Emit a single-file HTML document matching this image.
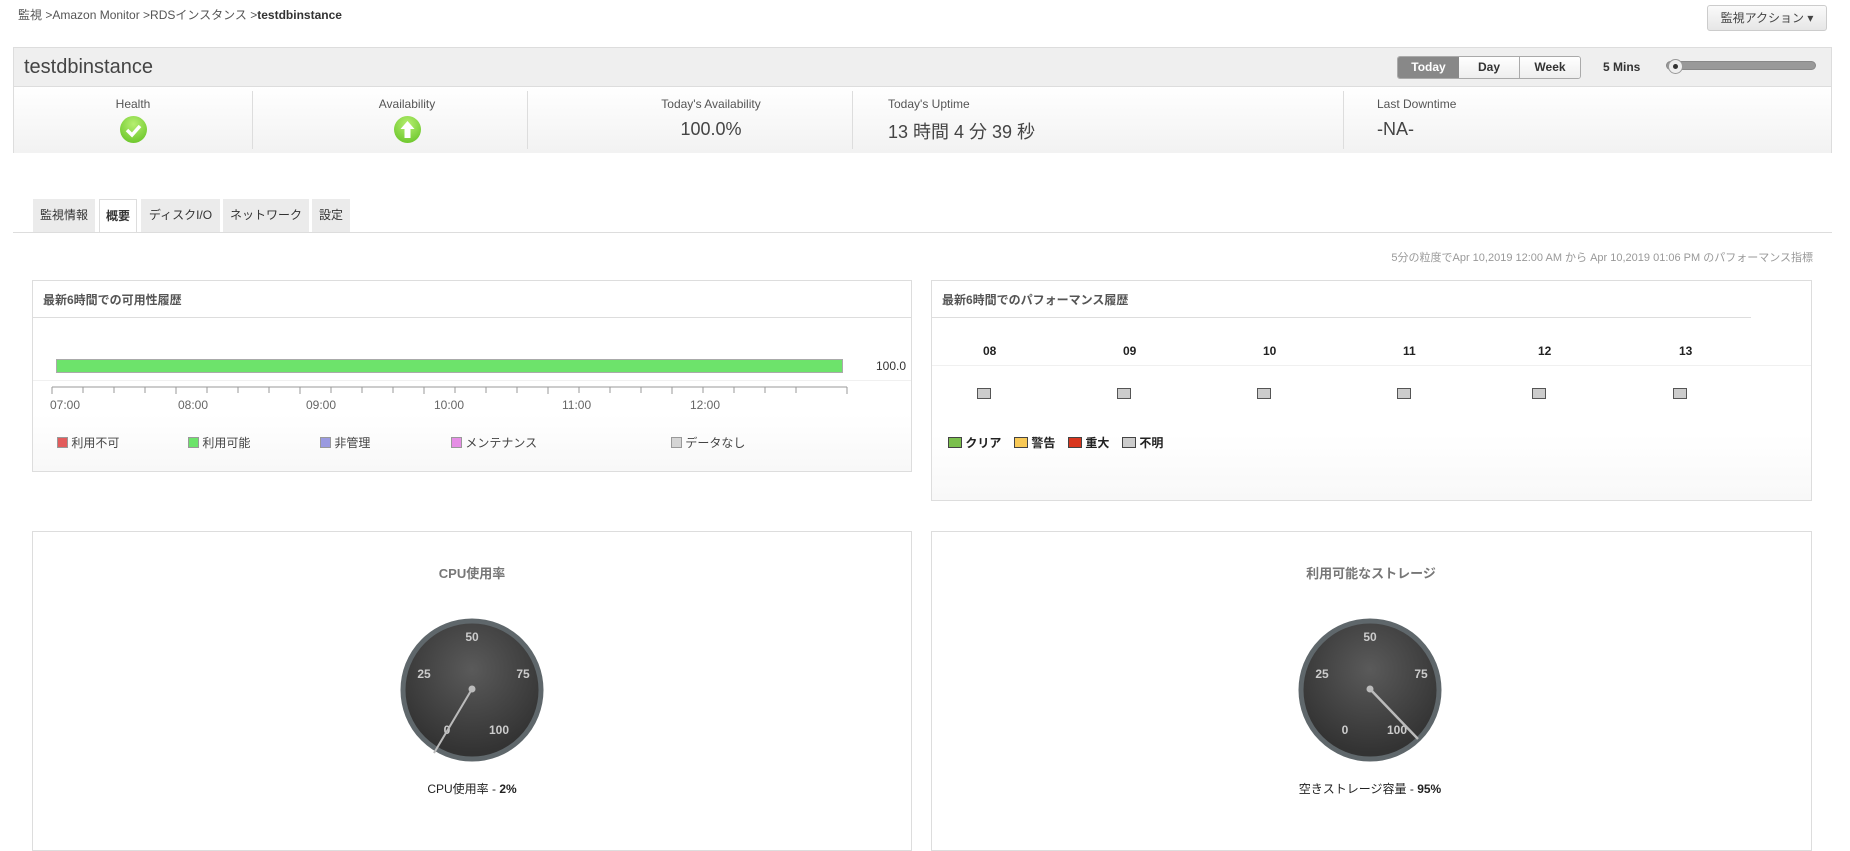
<!DOCTYPE html>
<html><head><meta charset="utf-8"><style>
*{margin:0;padding:0;box-sizing:border-box}
body{width:1850px;height:841px;background:#fff;font-family:"Liberation Sans","Noto Sans CJK JP",sans-serif;position:relative;overflow:hidden;color:#333}
.a{position:absolute;white-space:nowrap}
.bc{left:18px;top:6px;font-size:12px;color:#555}
.btn{left:1707px;top:5px;width:120px;height:26px;border:1px solid #ccc;border-radius:3px;background:linear-gradient(#fafafa,#e6e6e6);font-size:12px;color:#444;text-align:center;line-height:24px}
.hdr{left:13px;top:47px;width:1819px;height:106px;border:1px solid #ddd;background:#fff}
.hdrt{position:absolute;left:0;top:0;width:100%;height:39px;background:#efefef;border-bottom:1px solid #ddd}
.stats{position:absolute;left:0;top:39px;width:100%;height:66px;background:linear-gradient(#fff,#f2f2f2)}
.dv{position:absolute;top:4px;height:58px;width:1px;background:#ddd}
.lbl{font-size:12px;color:#555}
.tb{top:199px;height:33px;font-size:12px;line-height:33px;text-align:center;background:#ebebeb;color:#333}
.pan{border:1px solid #ddd;background:linear-gradient(#fff 70%,#f8f8f8)}
.ph{font-size:12px;font-weight:bold;color:#555}
.sq{width:11px;height:11px;display:inline-block;border:1px solid #999;vertical-align:-1px}
.lg{font-size:12px;color:#444;top:434px}
.hr{font-size:12px;font-weight:bold;color:#222;top:344px}
.bx{top:388px;width:14px;height:11px;border:1px solid #555;background:#ccc}
.pl{font-size:12px;font-weight:bold;color:#222;top:434px}
</style></head><body>
<div class="a bc">監視 &gt;Amazon Monitor &gt;RDSインスタンス &gt;<b style="color:#333">testdbinstance</b></div>
<div class="a btn">監視アクション ▾</div>
<div class="a hdr">
 <div class="hdrt">
  <div class="a" style="left:10px;top:8px;font-size:20px;color:#444">testdbinstance</div>
  <div class="a" style="left:1383px;top:8px;width:184px;height:23px;border:1px solid #aaa;border-radius:3px;overflow:hidden;display:flex;font-size:12px;font-weight:bold;line-height:21px;text-align:center">
   <div style="width:61px;background:#888;color:#fff">Today</div><div style="width:61px;background:linear-gradient(#fff,#eee);border-right:1px solid #aaa;color:#333">Day</div><div style="flex:1;background:linear-gradient(#fff,#eee);color:#333">Week</div></div>
  <div class="a" style="left:1589px;top:12px;font-size:12px;font-weight:bold;color:#333">5 Mins</div>
  <div class="a" style="left:1652px;top:13px;width:150px;height:9px;border-radius:5px;background:#999;border:1px solid #888"></div>
  <div class="a" style="left:1654px;top:11px;width:15px;height:15px;border-radius:50%;background:#eee;border:1px solid #999"><div style="width:5px;height:5px;background:#333;border-radius:50%;margin:4px"></div></div>
 </div>
 <div class="stats">
  <div class="dv" style="left:238px"></div><div class="dv" style="left:513px"></div><div class="dv" style="left:838px"></div><div class="dv" style="left:1329px"></div>
  <div class="a lbl" style="left:119px;top:10px;transform:translateX(-50%)">Health</div>
  <div class="a" style="left:106px;top:29px;width:27px;height:27px;border-radius:50%;background:radial-gradient(circle at 50% 30%,#b6ef70,#5fbf1f)"><svg width="27" height="27"><path d="M7 14l5 5 8-9" stroke="#fff" stroke-width="3.5" fill="none"/></svg></div>
  <div class="a lbl" style="left:393px;top:10px;transform:translateX(-50%)">Availability</div>
  <div class="a" style="left:380px;top:29px;width:27px;height:27px;border-radius:50%;background:radial-gradient(circle at 50% 30%,#b6ef70,#5fbf1f)"><svg width="27" height="27"><path d="M13.5 5l7 8h-4v9h-6v-9h-4z" fill="#fff"/></svg></div>
  <div class="a lbl" style="left:697px;top:10px;transform:translateX(-50%)">Today's Availability</div>
  <div class="a" style="left:697px;top:32px;transform:translateX(-50%);font-size:18px;color:#444">100.0%</div>
  <div class="a lbl" style="left:874px;top:10px">Today's Uptime</div>
  <div class="a" style="left:874px;top:31px;font-size:18px;color:#444">13 時間 4 分 39 秒</div>
  <div class="a lbl" style="left:1363px;top:10px">Last Downtime</div>
  <div class="a" style="left:1363px;top:32px;font-size:18px;color:#444">-NA-</div>
 </div>
</div>
<div class="a tb" style="left:33px;width:62px">監視情報</div>
<div class="a tb" style="left:99px;width:38px;background:#fff;border:1px solid #ddd;border-bottom:none;height:34px;font-weight:bold">概要</div>
<div class="a tb" style="left:141px;width:79px">ディスクI/O</div>
<div class="a tb" style="left:223px;width:86px">ネットワーク</div>
<div class="a tb" style="left:312px;width:38px">設定</div>
<div class="a" style="left:13px;top:232px;width:1819px;height:1px;background:#ddd"></div>
<div class="a" style="right:37px;top:249px;font-size:11px;color:#999">5分の粒度でApr 10,2019 12:00 AM から Apr 10,2019 01:06 PM のパフォーマンス指標</div>

<div class="a pan" style="left:32px;top:280px;width:880px;height:192px"></div>
<div class="a ph" style="left:43px;top:291px">最新6時間での可用性履歴</div>
<div class="a" style="left:33px;top:317px;width:878px;height:1px;background:#ddd"></div>
<div class="a" style="left:56px;top:359px;width:787px;height:14px;background:#6de36b;border:1px solid #aaa"></div>
<div class="a" style="left:876px;top:359px;font-size:12px;color:#333">100.0</div>
<div class="a" style="left:33px;top:380px;width:878px;height:1px;background:#f0f0f0"></div>
<svg class="a" style="left:50px;top:383px" width="800" height="12">
<path d="M2 4H797M2 4v7M33 4v6M64 4v6M95 4v6M126 4v7M157 4v6M188 4v6M219 4v6M250 4v7M281 4v6M312 4v6M343 4v6M374 4v7M405 4v6M436 4v6M467 4v6M498 4v7M529 4v6M560 4v6M591 4v6M622 4v7M653 4v6M684 4v6M715 4v6M746 4v6M797 4v7" stroke="#999"/></svg>
<div class="a" style="left:50px;top:398px;font-size:12px;color:#666">07:00</div>
<div class="a" style="left:178px;top:398px;font-size:12px;color:#666">08:00</div>
<div class="a" style="left:306px;top:398px;font-size:12px;color:#666">09:00</div>
<div class="a" style="left:434px;top:398px;font-size:12px;color:#666">10:00</div>
<div class="a" style="left:562px;top:398px;font-size:12px;color:#666">11:00</div>
<div class="a" style="left:690px;top:398px;font-size:12px;color:#666">12:00</div>
<div class="a lg" style="left:57px"><span class="sq" style="background:#e25c5c"></span> 利用不可</div>
<div class="a lg" style="left:188px"><span class="sq" style="background:#6de36b"></span> 利用可能</div>
<div class="a lg" style="left:320px"><span class="sq" style="background:#9a9ae0"></span> 非管理</div>
<div class="a lg" style="left:451px"><span class="sq" style="background:#e58ee5"></span> メンテナンス</div>
<div class="a lg" style="left:671px"><span class="sq" style="background:#d5d5d5"></span> データなし</div>

<div class="a pan" style="left:931px;top:280px;width:881px;height:221px"></div>
<div class="a ph" style="left:942px;top:291px">最新6時間でのパフォーマンス履歴</div>
<div class="a" style="left:932px;top:317px;width:819px;height:1px;background:#ddd"></div>
<div class="a hr" style="left:983px">08</div><div class="a hr" style="left:1123px">09</div><div class="a hr" style="left:1263px">10</div><div class="a hr" style="left:1403px">11</div><div class="a hr" style="left:1538px">12</div><div class="a hr" style="left:1679px">13</div>
<div class="a" style="left:932px;top:365px;width:879px;height:1px;background:#f0f0f0"></div>
<div class="a bx" style="left:977px"></div><div class="a bx" style="left:1117px"></div><div class="a bx" style="left:1257px"></div><div class="a bx" style="left:1397px"></div><div class="a bx" style="left:1532px"></div><div class="a bx" style="left:1673px"></div>
<div class="a pl" style="left:948px"><span class="sq" style="background:#7bbf4d;border-color:#444;width:14px"></span> クリア</div>
<div class="a pl" style="left:1014px"><span class="sq" style="background:#f8c956;border-color:#444;width:14px"></span> 警告</div>
<div class="a pl" style="left:1068px"><span class="sq" style="background:#d8361e;border-color:#444;width:14px"></span> 重大</div>
<div class="a pl" style="left:1122px"><span class="sq" style="background:#ccc;border-color:#444;width:14px"></span> 不明</div>

<div class="a" style="left:32px;top:531px;width:880px;height:320px;border:1px solid #ddd"></div>
<div class="a" style="left:931px;top:531px;width:881px;height:320px;border:1px solid #ddd"></div>
<div class="a" style="left:472px;top:563px;transform:translateX(-50%);font-size:13px;font-weight:bold;color:#777">CPU使用率</div>
<div class="a" style="left:1371px;top:563px;transform:translateX(-50%);font-size:13px;font-weight:bold;color:#777">利用可能なストレージ</div>
<svg class="a" style="left:399px;top:617px" width="146" height="146"><defs><radialGradient id="g" cx="50%" cy="35%" r="60%"><stop offset="0" stop-color="#5a5a5a"/><stop offset="1" stop-color="#333"/></radialGradient></defs>
<circle cx="73" cy="73" r="69" fill="url(#g)" stroke="#5f676b" stroke-width="5"/>
<g fill="#ccc" font-size="12" font-weight="bold" font-family="Liberation Sans" text-anchor="middle"><text x="73" y="24">50</text><text x="25" y="61">25</text><text x="124" y="61">75</text><text x="48" y="117">0</text><text x="100" y="117">100</text></g>
<path d="M73 72L35 136" stroke="#bbb" stroke-width="2"/><circle cx="73" cy="72" r="3.5" fill="#bbb"/></svg>
<svg class="a" style="left:1297px;top:617px" width="146" height="146"><defs><radialGradient id="g2" cx="50%" cy="35%" r="60%"><stop offset="0" stop-color="#5a5a5a"/><stop offset="1" stop-color="#333"/></radialGradient></defs>
<circle cx="73" cy="73" r="69" fill="url(#g2)" stroke="#5f676b" stroke-width="5"/>
<g fill="#ccc" font-size="12" font-weight="bold" font-family="Liberation Sans" text-anchor="middle"><text x="73" y="24">50</text><text x="25" y="61">25</text><text x="124" y="61">75</text><text x="48" y="117">0</text><text x="100" y="117">100</text></g>
<path d="M73 72L121 122" stroke="#bbb" stroke-width="2.5"/><circle cx="73" cy="72" r="3.5" fill="#bbb"/></svg>
<div class="a" style="left:472px;top:780px;transform:translateX(-50%);font-size:12px;color:#222">CPU使用率 - <b>2%</b></div>
<div class="a" style="left:1370px;top:780px;transform:translateX(-50%);font-size:12px;color:#222">空きストレージ容量 - <b>95%</b></div>
</body></html>
